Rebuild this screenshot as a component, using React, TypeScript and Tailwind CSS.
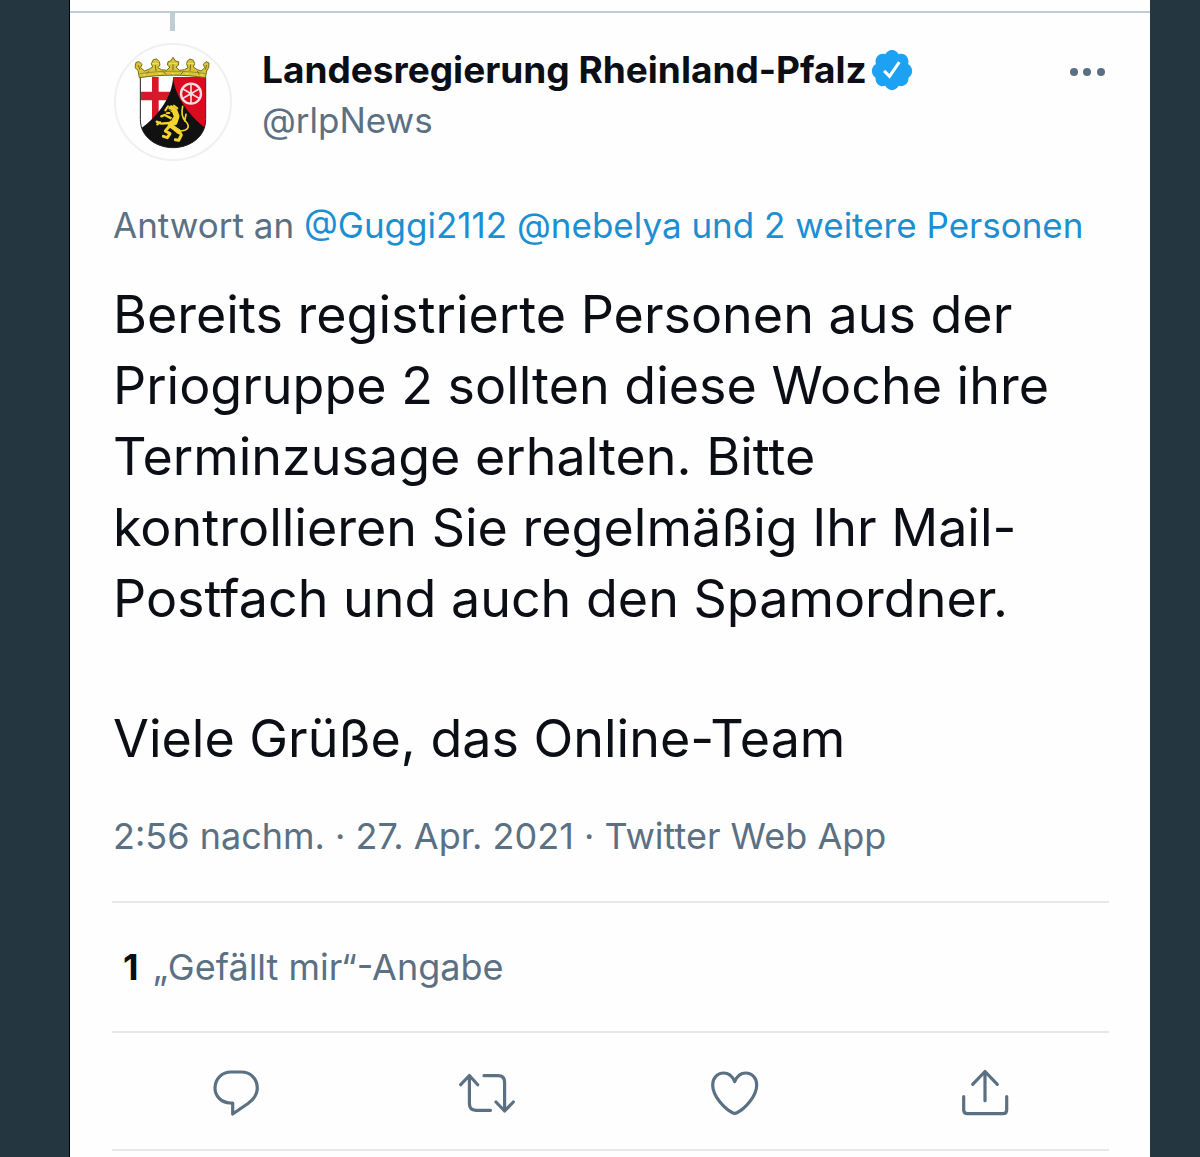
const CoatOfArms = () => (
  <svg viewBox="0 0 354 354" className="-m-0.5 size-[118px]" role="img" aria-label="Wappen Rheinland-Pfalz">
    <defs>
      <clipPath id="shield">
        <path d="M79 102H275V230C275 282 226 314 177 314C128 314 79 282 79 230Z" />
      </clipPath>
    </defs>
    <g clipPath="url(#shield)">
      <rect x="79" y="100" width="98" height="214" fill="#fff" />
      <rect x="177" y="100" width="98" height="214" fill="#dc0a1e" />
      <path d="M114 100H134V300H114ZM79 146H177V172H79Z" fill="#d8192c" />
      <path d="M177 106C174 158 138 216 79 258V314H275V256C222 216 184 158 177 106Z" fill="#111" />
    </g>
    <path d="M79 102V230C79 282 128 314 177 314C226 314 275 282 275 230V102" fill="none" stroke="#222" strokeWidth="3" />
    {/* wheel of Mainz */}
    <g fill="none" stroke="#f7dde0">
      <circle cx="231" cy="152" r="30" strokeWidth="7" />
      <path d="M231 124V180M207 138L255 166M207 166L255 138" strokeWidth="5" />
      <circle cx="231" cy="152" r="6" fill="#f7dde0" />
    </g>
    {/* lion of the Palatinate */}
    <g fill="none" stroke="#f2d52c" strokeLinecap="round" strokeLinejoin="round">
      <path d="M172 196L182 204L188 220L182 238" strokeWidth="17" />
      <path d="M180 230L168 246L184 258L194 266" strokeWidth="14" />
      <path d="M172 226L152 216L142 220M166 240L142 242L128 236M130 244L138 238" strokeWidth="7" />
      <path d="M166 250L154 264L168 272L160 284L148 280M194 262L202 276L194 292L184 290" strokeWidth="9" />
      <path d="M194 264C230 264 226 246 214 234C202 222 202 208 206 190M212 234L216 214" strokeWidth="5" />
      <path d="M154 202L162 190M158 210H166M180 188L190 196" strokeWidth="6" />
    </g>
    <path d="M166 200L172 202M154 206L160 207M176 222L170 234" stroke="#3a3010" strokeWidth="3" />
    {/* crown */}
    <g stroke="#77691a" strokeWidth="3" strokeLinejoin="round">
      <path
        d="M76 104L72 82L63 74L66 58L76 56L84 64L80 74L92 84L106 78L116 72L112 62L118 50L128 48L136 56L138 66L132 74L142 80L158 82L168 72L160 66L162 56L170 54L177 43L184 54L194 56L194 66L186 72L196 82L212 80L222 74L218 64L220 54L228 48L238 52L242 62L238 72L250 80L262 84L272 74L268 64L276 56L285 60L284 74L278 84L274 104C210 94 144 94 76 104Z"
        fill="#d9c53a"
      />
      <path d="M78 92C144 82 210 82 276 92" fill="none" stroke="#a08f22" />
      <path d="M98 92L106 84M124 66L126 84M148 86L156 94M177 60V82M200 94L208 86M230 64L228 84M250 84L256 94M72 66L78 80M278 66L274 80" fill="none" />
      <path d="M114 62H134M166 62H188M220 62H240M88 96H94M134 92H142M174 92H180M214 92H222M260 96H266" fill="none" stroke="#f3e469" />
    </g>
  </svg>
);

const VerifiedBadge = () => (
  <svg viewBox="0 0 24 24" className="size-[46px] shrink-0 text-[#1da1f2]" fill="currentColor" role="img" aria-label="Verifiziert">
    <path d="M22.5 12.5c0-1.58-.875-2.95-2.148-3.6.154-.435.238-.905.238-1.4 0-2.21-1.71-3.998-3.818-3.998-.47 0-.92.084-1.336.25C14.818 2.415 13.51 1.5 12 1.5s-2.816.917-3.437 2.25c-.415-.165-.866-.25-1.336-.25-2.11 0-3.818 1.79-3.818 4 0 .494.083.964.237 1.4-1.272.65-2.147 2.018-2.147 3.6 0 1.495.782 2.798 1.942 3.486-.02.17-.032.34-.032.514 0 2.21 1.708 4 3.818 4 .47 0 .92-.086 1.335-.25.62 1.334 1.926 2.25 3.437 2.25 1.512 0 2.818-.916 3.437-2.25.415.163.865.248 1.336.248 2.11 0 3.818-1.79 3.818-4 0-.174-.012-.344-.033-.513 1.158-.687 1.943-1.99 1.943-3.484z" />
    <path d="M7.9 12.5L10.7 15.3L15.8 7.9" fill="none" stroke="#fff" strokeWidth="1.6" />
  </svg>
);

const actions = [
  {
    label: "Antworten",
    path: "M22.7 48V37H20C11.5 36.5 5 30.5 5 22C5 13 12 6 21 6H31.5C40.5 6 47.3 13 47.3 22C47.3 28.5 43.5 33.5 38 37.5Z",
  },
  {
    label: "Retweeten",
    path: "M1.7 18.7L10.4 9.5L18.7 18.7M10.4 9.5V37.5C10.4 42 12.5 44.3 17 44.3H31.5M25 9.7H39C43.5 9.7 45.6 12 45.6 16.5V45M37 36L45.6 45L54.3 36",
  },
  {
    label: "Gefällt mir",
    path: "M26.7 15.5C24.5 10.5 20.5 7 15.7 7C9 7 4.7 12.5 4.7 19C4.7 30.5 17 43 24.5 46.8C26 47.5 27.4 47.5 28.9 46.8C36.5 43 48.7 30.5 48.7 19C48.7 12.5 44.4 7 37.7 7C32.9 7 28.9 10.5 26.7 15.5Z",
  },
  {
    label: "Teilen",
    path: "M28 34.7V5.5M15.7 18.3L28 5.5L40.3 18.3M6.7 30.7V44C6.7 46.5 8 47.7 10.5 47.7H46C48.5 47.7 49.7 46.5 49.7 44V30.7",
  },
];

const App = () => {
  return (
    <div className="min-h-screen bg-[#243640] pl-[69px] pr-[50px] font-['Inter',sans-serif] text-[#0b0e14]">
      <main className="min-h-screen border-l border-black bg-[#fefefe]">
        <div className="h-[11px]" />
        <div className="border-t-2 border-[#c0cdd5]" />
        <article className="pr-[41px] pl-[42px]">
          <div className="ml-[58px] h-[18px] w-[5px] bg-[#c0cdd5]" />

          <header className="mt-3 flex h-[118px] gap-[30px] pl-0.5">
            <a href="#profil" className="size-[118px] shrink-0 overflow-hidden rounded-full border-2 border-[#f0f0f2]">
              <CoatOfArms />
            </a>
            <div className="min-w-0 flex-1 pt-0.5">
              <div className="flex items-center">
                <h1 className="text-[37px] leading-[50px] font-bold">Landesregierung Rheinland-Pfalz</h1>
                <div className="ml-0.5">
                  <VerifiedBadge />
                </div>
                <button type="button" aria-label="Mehr" className="mr-1 ml-auto text-[#5b7083]">
                  <svg viewBox="0 0 36 12" className="h-3 w-9" fill="currentColor">
                    <circle cx="5" cy="8" r="4" />
                    <circle cx="18" cy="8" r="4" />
                    <circle cx="32" cy="8" r="4" />
                  </svg>
                </button>
              </div>
              <a href="#profil" className="block text-[35px] leading-[50px] text-[#5b7083]">@rlpNews</a>
            </div>
          </header>

          <p className="mt-[39px] pl-px text-[35px] leading-[50px] text-[#5b7083]">
            Antwort an{" "}
            <a href="#antwort" className="text-[#1b8fd2]">@Guggi2112 @nebelya und 2 weitere Personen</a>
          </p>

          <div className="mt-[29px] pl-px text-[52px] leading-[71px]">
            <p>
              Bereits registrierte Personen aus der
              <br />
              Priogruppe 2 sollten diese Woche ihre
              <br />
              Terminzusage erhalten. Bitte
              <br />
              kontrollieren Sie regelmäßig Ihr Mail-
              <br />
              Postfach und auch den Spamordner.
            </p>
            <p className="mt-[69px]">Viele Grüße, das Online-Team</p>
          </div>

          <p className="mt-[37px] pl-px text-[36px] leading-[50px] text-[#5b7083]">
            <time dateTime="2021-04-27T14:56">2:56 nachm. · 27. Apr. 2021</time> · <a href="#quelle">Twitter Web App</a>
          </p>

          <div className="mt-10 border-y-2 border-[#e6e8ea] py-[39px] pl-[11px]">
            <a href="#likes" className="block text-[36px] leading-[50px] text-[#5b7083]">
              <strong className="mr-1 font-bold">
                <span className="text-[#0b0e14]">1</span>
              </strong>{" "}
              „Gefällt mir“-Angabe
            </a>
          </div>

          <div className="grid grid-cols-4 border-b-2 border-[#e6e8ea] pt-[33px] pb-[29px]">
            {actions.map(({ label, path }) => (
              <button key={label} type="button" aria-label={label} className="flex justify-center text-[#5b7083]">
                <svg
                  viewBox="0 0 54 54"
                  className="size-[54px] overflow-visible"
                  fill="none"
                  stroke="currentColor"
                  strokeWidth="3.2"
                  strokeLinecap="round"
                  strokeLinejoin="round"
                >
                  <path d={path} />
                </svg>
              </button>
            ))}
          </div>
        </article>
      </main>
    </div>
  );
};

export default App;
